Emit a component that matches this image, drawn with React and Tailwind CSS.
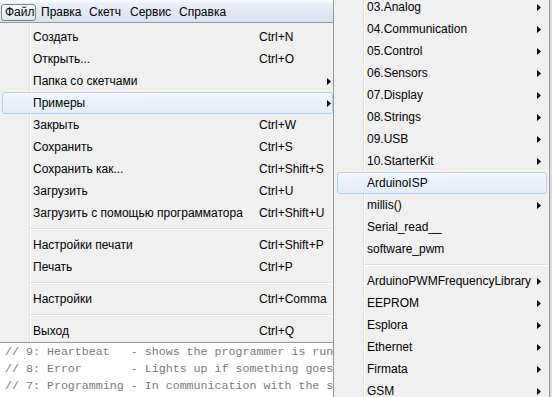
import React from 'react';

const mainItems = [
  { label: 'Создать', sc: 'Ctrl+N' },
  { label: 'Открыть...', sc: 'Ctrl+O' },
  { label: 'Папка со скетчами', arrow: true },
  { label: 'Примеры', arrow: true, active: true },
  { label: 'Закрыть', sc: 'Ctrl+W' },
  { label: 'Сохранить', sc: 'Ctrl+S' },
  { label: 'Сохранить как...', sc: 'Ctrl+Shift+S' },
  { label: 'Загрузить', sc: 'Ctrl+U' },
  { label: 'Загрузить с помощью программатора', sc: 'Ctrl+Shift+U' },
  { sep: true },
  { label: 'Настройки печати', sc: 'Ctrl+Shift+P' },
  { label: 'Печать', sc: 'Ctrl+P' },
  { sep: true },
  { label: 'Настройки', sc: 'Ctrl+Comma' },
  { sep: true },
  { label: 'Выход', sc: 'Ctrl+Q' },
];

const subItems = [
  { label: '03.Analog', arrow: true },
  { label: '04.Communication', arrow: true },
  { label: '05.Control', arrow: true },
  { label: '06.Sensors', arrow: true },
  { label: '07.Display', arrow: true },
  { label: '08.Strings', arrow: true },
  { label: '09.USB', arrow: true },
  { label: '10.StarterKit', arrow: true },
  { label: 'ArduinoISP', active: true },
  { label: 'millis()', arrow: true },
  { label: 'Serial_read__' },
  { label: 'software_pwm' },
  { sep: true },
  { label: 'ArduinoPWMFrequencyLibrary', arrow: true },
  { label: 'EEPROM', arrow: true },
  { label: 'Esplora', arrow: true },
  { label: 'Ethernet', arrow: true },
  { label: 'Firmata', arrow: true },
  { label: 'GSM', arrow: true },
];

const codeLines = [
  '// 9: Heartbeat   - shows the programmer is running',
  '// 8: Error       - Lights up if something goes wrong',
  '// 7: Programming - In communication with the slave',
];

const gutter =
  'bg-[linear-gradient(to_right,#f0f0f0_29px,#e2e3e3_29px,#e2e3e3_30px,#ffffff_30px,#ffffff_31px,#f0f0f0_31px)]';

function Arrow() {
  return (
    <svg width="4" height="7" viewBox="0 0 4 7" className="shrink-0">
      <path d="M0 0L4 3.5L0 7Z" fill="#000" />
    </svg>
  );
}

function Separator({ left }) {
  return (
    <div className={`h-[10px] pt-[4px] ${left}`}>
      <div className="h-px bg-[#e0e0e0]" />
      <div className="h-px bg-white" />
    </div>
  );
}

function App() {
  return (
    <div
      className="w-[552px] h-[397px] overflow-hidden flex bg-[#f0f0f0] text-[12px] text-black"
      style={{ fontFamily: '"Liberation Sans", Arial, sans-serif' }}
    >
      {/* Left: menu bar, File menu, editor */}
      <div className="w-[333px] shrink-0 flex flex-col">
        <div className="h-[22px] flex items-start pt-[4px] bg-[linear-gradient(to_bottom,#f7f9fc_0px,#f7f9fc_2px,#eaeff7_3px,#d9e2ef_22px)]">
          <div className="ml-[1px] w-[35px] h-[17px] border border-[#7d8086] rounded-[3px] bg-[linear-gradient(to_bottom,#fafbfd,#e2e8f1)] pl-[3px] leading-[15px] shrink-0">
            Файл
          </div>
          <div className="w-[48px] shrink-0 pl-[5px] leading-[15px] pt-[1px]">Правка</div>
          <div className="w-[41px] shrink-0 pl-[5px] leading-[15px] pt-[1px]">Скетч</div>
          <div className="w-[49px] shrink-0 pl-[5px] leading-[15px] pt-[1px]">Сервис</div>
          <div className="pl-[5px] leading-[15px] pt-[1px]">Справка</div>
        </div>

        <div className={`border-y border-[#979797] pt-[3px] ${gutter}`}>
          {mainItems.map((it, i) =>
            it.sep ? (
              <Separator key={i} left="ml-[30px]" />
            ) : (
              <div
                key={i}
                className={`flex items-center h-[22px] ml-[2px] border rounded-[3px] pl-[30px] whitespace-nowrap ${
                  it.active
                    ? 'border-[#aecff7] bg-[linear-gradient(to_bottom,#f3f7fd,#e4ecf8)]'
                    : 'border-transparent'
                }`}
              >
                <span className="w-[226px] shrink-0">{it.label}</span>
                {it.sc && <span>{it.sc}</span>}
                {it.arrow && (
                  <span className="ml-auto mr-[1px] flex">
                    <Arrow />
                  </span>
                )}
              </div>
            )
          )}
        </div>

        <div
          className="flex-1 bg-white pl-[5px] text-[11.65px] leading-[17px] text-[#7a7a7a] whitespace-pre overflow-hidden"
          style={{ fontFamily: '"Liberation Mono", "Courier New", monospace' }}
        >
          {codeLines.map((l, i) => (
            <div key={i} className="overflow-hidden">{l}</div>
          ))}
        </div>
      </div>

      {/* Examples submenu */}
      <div className={`w-[217px] shrink-0 h-full border-x border-[#979797] overflow-hidden ${gutter}`}>
        <div className="-mt-[4px]">
          {subItems.map((it, i) =>
            it.sep ? (
              <Separator key={i} left="ml-[29px] mr-[2px]" />
            ) : (
              <div
                key={i}
                className={`flex items-center h-[22px] ml-[3px] mr-[2px] border rounded-[3px] pl-[29px] whitespace-nowrap ${
                  it.active
                    ? 'border-[#aecff7] bg-[linear-gradient(to_bottom,#f3f7fd,#e4ecf8)]'
                    : 'border-transparent'
                }`}
              >
                <span>{it.label}</span>
                {it.arrow && (
                  <span className="ml-auto mr-[5px] flex">
                    <Arrow />
                  </span>
                )}
              </div>
            )
          )}
        </div>
      </div>

      <div className="flex-1 bg-[#dcdcdc]" />
    </div>
  );
}

export default App;
